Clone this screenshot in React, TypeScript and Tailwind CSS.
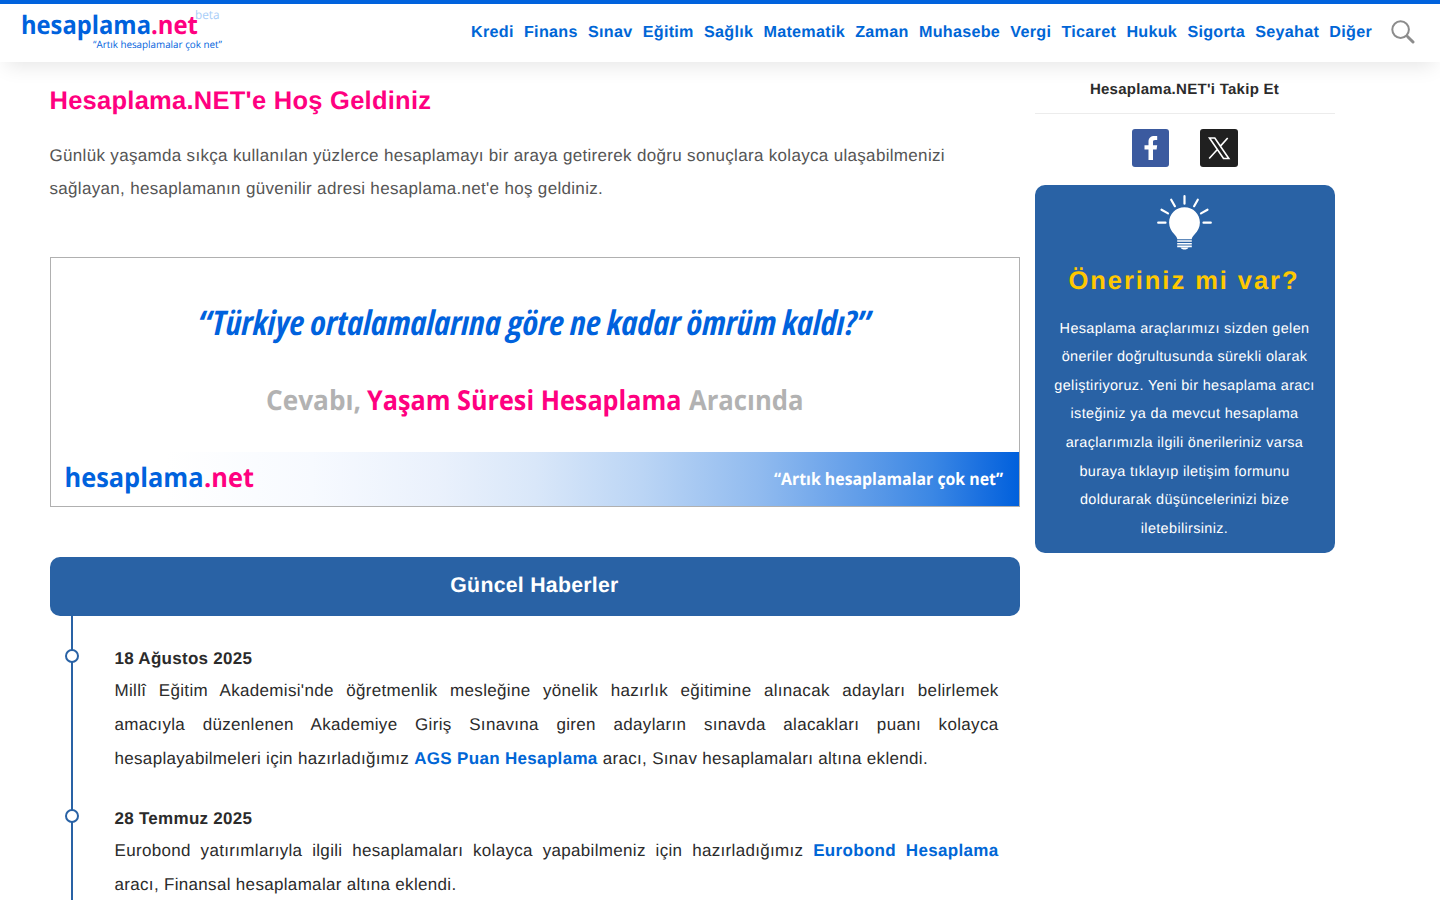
import React from 'react';

const SANS = "font-['Liberation_Sans',Arial,sans-serif]";

const menu = [
  'Kredi', 'Finans', 'Sınav', 'Eğitim', 'Sağlık', 'Matematik', 'Zaman',
  'Muhasebe', 'Vergi', 'Ticaret', 'Hukuk', 'Sigorta', 'Seyahat', 'Diğer',
];

interface NewsItem {
  date: string;
  before: string;
  link: string;
  after: string;
}

const news: NewsItem[] = [
  {
    date: '18 Ağustos 2025',
    before:
      "Millî Eğitim Akademisi'nde öğretmenlik mesleğine yönelik hazırlık eğitimine alınacak adayları belirlemek amacıyla\u00a0düzenlenen Akademiye Giriş Sınavına giren adayların sınavda alacakları puanı kolayca hesaplayabilmeleri için hazırladığımız ",
    link: 'AGS Puan Hesaplama',
    after: ' aracı, Sınav hesaplamaları altına eklendi.',
  },
  {
    date: '28 Temmuz 2025',
    before:
      'Eurobond yatırımlarıyla ilgili hesaplamaları kolayca yapabilmeniz için hazırladığımız ',
    link: 'Eurobond Hesaplama',
    after: ' aracı, Finansal hesaplamalar altına eklendi.',
  },
];

interface FitTextProps {
  x: number;
  y: number;
  width: number;
  size: number;
  fill: string;
  weight?: number;
  italic?: boolean;
  children: string;
}

// SVG text squeezed to a fixed width
const FitText: React.FC<FitTextProps> = ({ x, y, width, size, fill, weight = 750, italic, children }) => (
  <text
    x={x}
    y={y}
    textLength={width}
    lengthAdjust="spacingAndGlyphs"
    fontSize={size}
    fontWeight={weight}
    fontStyle={italic ? 'italic' : 'normal'}
    fill={fill}
  >
    {children}
  </text>
);

const Logo = () => (
  <svg width="230" height="58" viewBox="0 4 230 58" className="block shrink-0 tracking-normal font-['Open_Sans','Noto_Sans',sans-serif]">
    <FitText x={21} y={34} width={130} size={25.5} fill="#0062dd">hesaplama</FitText>
    <FitText x={151} y={34} width={47} size={25.5} fill="#ff0080">.net</FitText>
    <FitText x={195} y={19.3} width={24.5} size={12} weight={400} fill="#a8cdf8">beta</FitText>
    <FitText x={93} y={48} width={129} size={10} weight={450} fill="#0062dd">“Artık hesaplamalar çok net”</FitText>
  </svg>
);

const Header = () => (
  <header className="relative flex h-[62px] items-center justify-between border-t-4 border-[#0062dd] bg-white shadow-[0_10px_20px_-6px_rgba(0,0,0,0.1)]">
    <Logo />
    <div className="flex items-center pr-[25px] pb-[2px]">
      <nav className="flex gap-[10.3px] text-[16.15px] leading-6 font-bold tracking-[0.275px] text-[#0066d6]">
        {menu.map(item => (
          <a key={item} href="#">{item}</a>
        ))}
      </nav>
      <svg width="24" height="24" viewBox="0 0 24 24" fill="none" stroke="#8c8c8c" className="ml-[19px]">
        <circle cx="9.6" cy="9.6" r="8.3" strokeWidth="2" />
        <path d="M15.4 15.4l2 2" strokeWidth="2.2" />
        <path d="M17.2 17.2l4.8 4.8" strokeWidth="3" strokeLinecap="round" />
      </svg>
    </div>
  </header>
);

const Banner = () => (
  <svg width="970" height="250" viewBox="0 0 970 250" className="mt-[52px] block tracking-normal font-['Open_Sans','Noto_Sans',sans-serif]">
    <defs>
      <linearGradient id="strip" x1="0" x2="1" y1="0" y2="0">
        <stop offset="0.12" stopColor="#ffffff" />
        <stop offset="0.27" stopColor="#f7faff" />
        <stop offset="0.4" stopColor="#eaf1fc" />
        <stop offset="0.5" stopColor="#d9e7f9" />
        <stop offset="0.61" stopColor="#bbd5f5" />
        <stop offset="0.73" stopColor="#91bbef" />
        <stop offset="0.8" stopColor="#71a7eb" />
        <stop offset="0.86" stopColor="#5596e7" />
        <stop offset="0.91" stopColor="#3b87e4" />
        <stop offset="0.96" stopColor="#1a70e0" />
        <stop offset="1" stopColor="#0060dc" />
      </linearGradient>
    </defs>
    <rect x="0" y="195" width="970" height="55" fill="url(#strip)" />
    <rect x="0.5" y="0.5" width="969" height="249" fill="none" stroke="#b0b0b0" />
    <g className="[font-stretch:80%]">
      <FitText x={147.5} y={78} width={673.5} size={34} weight={700} italic fill="#0062dd">“Türkiye ortalamalarına göre ne kadar ömrüm kaldı?”</FitText>
    </g>
    <FitText x={216} y={153.3} width={95} size={27.5} fill="#b2b2b2">Cevabı,</FitText>
    <FitText x={317} y={153.3} width={314.5} size={27.5} fill="#ff0080">Yaşam Süresi Hesaplama</FitText>
    <FitText x={639} y={153.3} width={114.5} size={27.5} fill="#b2b2b2">Aracında</FitText>
    <FitText x={14.5} y={229.5} width={139} size={26.8} fill="#0062dd">hesaplama</FitText>
    <FitText x={154} y={229.5} width={50} size={26.8} fill="#ff0080">.net</FitText>
    <FitText x={724} y={228} width={229} size={17} weight={700} fill="#ffffff">“Artık hesaplamalar çok net”</FitText>
  </svg>
);

const News = () => (
  <section className="mt-[50px]">
    <h2 className="h-[59px] rounded-[10px] bg-[#2962a5] pr-px text-center text-[21.25px] leading-[56px] font-bold text-white">
      Güncel Haberler
    </h2>
    <div className="ml-[21px] border-l-2 border-[#2962a5] pt-[26px] pr-[21.5px]">
      {news.map(item => (
        <article key={item.date} className="relative mb-[26px] pl-[41.5px] text-[17px] leading-[34px] text-[#2b2b2b]">
          {/* marker sits on top of the timeline */}
          <span className="absolute top-[7px] -left-[8px] h-[14px] w-[14px] rounded-full border-2 border-[#2962a5] bg-white" />
          <h3 className="h-[32px] font-bold">{item.date}</h3>
          <p className="text-justify tracking-[0.32px]">
            {item.before}
            <a href="#" className="font-bold text-[#0066d6]">{item.link}</a>
            {item.after}
          </p>
        </article>
      ))}
    </div>
  </section>
);

const Bulb = () => (
  <svg width="58" height="56" viewBox="0 0 58 56" className="mx-auto block" fill="#fff">
    <path d="M28.500 12.200c-8.700 0-15.400 6.800-15.400 15.300 0 4.900 2.300 8.500 5 11.500 1.900 2.100 3 3.400 3.200 5.300h14.400c.2-1.900 1.300-3.200 3.200-5.300 2.700-3 5-6.600 5-11.500C43.900 19 37.200 12.200 28.500 12.200z" />
    <path d="M21.200 46h14.600M21.200 48.700h14.600M21.200 51.400h14.600" stroke="#fff" strokeWidth="1.600" />
    <path d="M24.500 52.500h8c-.8 1.500-2.200 2.100-4 2.100s-3.200-.6-4-2.100z" />
    <path
      d="M28.500 1.200v7.500M15.200 4.700l3.700 6.500M41.800 4.700l-3.700 6.500M5.500 14.700l6.500 3.700M51.500 14.700l-6.500 3.700M2.200 27.700h7.300M54.800 27.700h-7.300"
      stroke="#fff"
      strokeWidth="2.200"
      strokeLinecap="round"
    />
  </svg>
);

const Sidebar = () => (
  <aside className="w-[300px] pt-[16px] text-center">
    <h3 className="h-[36px] border-b border-[#ececec] pr-px text-[15px] leading-6 font-bold text-[#2b2b2b]">
      Hesaplama.NET'i Takip Et
    </h3>
    <div className="mt-[15px] flex justify-center gap-[30px]">
      <svg width="38" height="38" viewBox="0 0 38 38">
        <rect width="37" height="38" rx="3" fill="#3b5a9f" />
        <path d="M16.500 31V20.500h-4v-4.300h4v-3.400c0-4 2.300-5.900 6-5.900 1.200 0 2.200.1 2.700.2v4h-2.100c-1.800 0-2.100.8-2.100 2.100v3h4.200l-.6 4.300H21V31z" fill="#fff" />
      </svg>
      <svg width="38" height="38" viewBox="0 0 38 38">
        <rect width="38" height="38" rx="3" fill="#202020" />
        <path d="M9.500 9h5.300l14 20.500h-5.300zM9.200 29.500l8.600-9.500M20.200 17.400L27.700 9" fill="none" stroke="#fff" strokeWidth="1.600" />
      </svg>
    </div>
    <div className="mt-[18px] h-[368px] rounded-[10px] bg-[#2962a5] px-[15px] pt-[10px] text-white">
      <Bulb />
      <h2 className="mt-[10px] pr-[2px] text-[25.5px] leading-[40px] font-bold tracking-[1.95px] text-[#ffc800]">Öneriniz mi var?</h2>
      <p className="mt-[13.6px] -ml-[0.5px] pr-[0.5px] text-[14.45px] leading-[28.6px] tracking-[0.35px]">
        Hesaplama araçlarımızı sizden gelen öneriler doğrultusunda sürekli olarak geliştiriyoruz. Yeni bir
        hesaplama aracı isteğiniz ya da mevcut hesaplama araçlarımızla ilgili önerileriniz varsa buraya tıklayıp
        iletişim formunu doldurarak düşüncelerinizi bize iletebilirsiniz.
      </p>
    </div>
  </aside>
);

export default function App() {
  return (
    <div className={`h-screen overflow-hidden bg-white tracking-[0.28px] [text-rendering:geometricPrecision] ${SANS}`}>
      <Header />
      <div className="flex gap-[15px] pl-[50px]">
        <main className="w-[970px] pt-[19px]">
          <h1 className="-ml-[0.5px] text-[25.5px] leading-[40px] font-bold tracking-[0.26px] text-[#ff0080]">
            Hesaplama.NET'e Hoş Geldiniz
          </h1>
          <p className="mt-[18px] -ml-[0.5px] text-[17px] leading-[33px] tracking-[0.32px] text-[#555]">
            Günlük yaşamda sıkça kullanılan yüzlerce hesaplamayı bir araya getirerek doğru sonuçlara kolayca
            ulaşabilmenizi sağlayan, hesaplamanın güvenilir adresi hesaplama.net'e hoş geldiniz.
          </p>
          <Banner />
          <News />
        </main>
        <Sidebar />
      </div>
    </div>
  );
}
